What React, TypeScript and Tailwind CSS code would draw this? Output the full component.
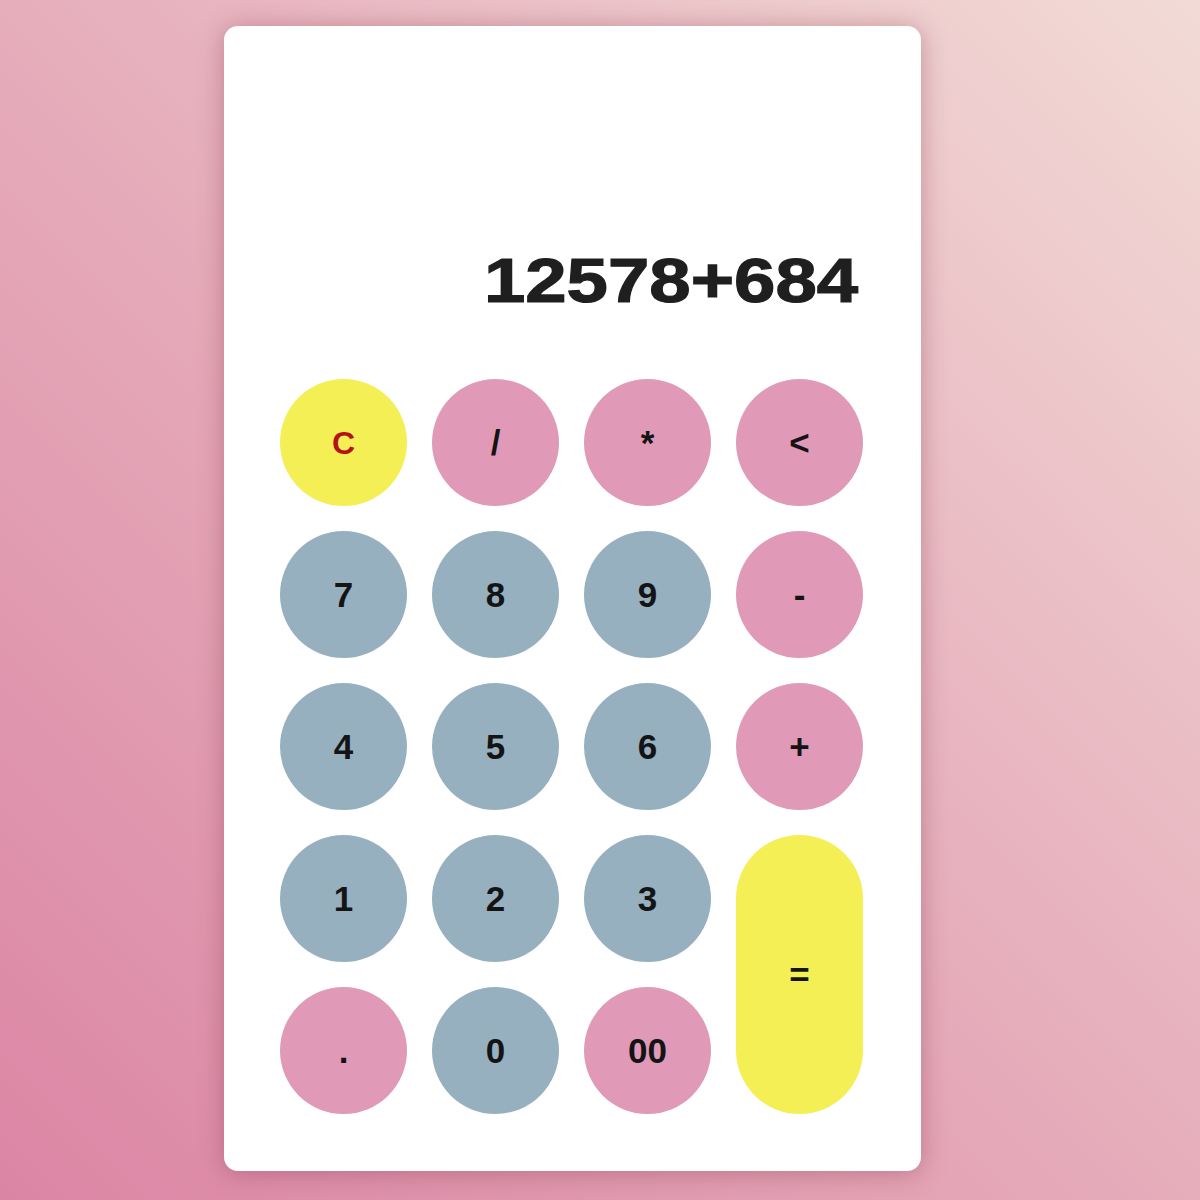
import React from 'react'

type Key = {
  label: string
  tone: 'yellow' | 'pink' | 'blue'
  tall?: boolean
  red?: boolean
}

const keys: Key[] = [
  { label: 'C', tone: 'yellow', red: true },
  { label: '/', tone: 'pink' },
  { label: '*', tone: 'pink' },
  { label: '<', tone: 'pink' },
  { label: '7', tone: 'blue' },
  { label: '8', tone: 'blue' },
  { label: '9', tone: 'blue' },
  { label: '-', tone: 'pink' },
  { label: '4', tone: 'blue' },
  { label: '5', tone: 'blue' },
  { label: '6', tone: 'blue' },
  { label: '+', tone: 'pink' },
  { label: '1', tone: 'blue' },
  { label: '2', tone: 'blue' },
  { label: '3', tone: 'blue' },
  { label: '=', tone: 'yellow', tall: true },
  { label: '.', tone: 'pink' },
  { label: '0', tone: 'blue' },
  { label: '00', tone: 'pink' }
]

const toneClass = {
  yellow: 'bg-[#f3ef55]',
  pink: 'bg-[#e09ab8]',
  blue: 'bg-[#96b0bf]'
}

export default function App() {
  return (
    <div className="w-full h-[1200px] overflow-hidden flex pl-[224px] pt-[26px] bg-[linear-gradient(to_top_right,#db85a4_0%,#e6adbb_50%,#f2dbd6_100%)] font-['Liberation_Sans',Arial,sans-serif]">
      <div className="w-[697px] h-[1145px] bg-white rounded-[14px] px-[56px] flex flex-col shadow-[0_2px_26px_rgba(130,50,70,0.4)]">
        {/* display */}
        <div className="h-[353px] flex items-end justify-end pr-[7px] pb-[67px]">
          <span className="inline-block origin-right scale-x-[1.18] text-[63px] leading-none font-bold text-[#1f1f1f] [-webkit-text-stroke:1.2px_#1f1f1f]">
            12578+684
          </span>
        </div>

        {/* keypad */}
        <div className="grid grid-cols-[repeat(4,127px)] grid-rows-[repeat(5,127px)] gap-[25px]">
          {keys.map(k => (
            <button
              key={k.label}
              className={`${toneClass[k.tone]} ${k.tall ? 'row-span-2' : ''} rounded-full flex items-center justify-center font-bold leading-none ${k.red ? 'text-[#b3121c] text-[32px]' : 'text-[#141414] text-[35px]'}`}
            >
              {k.label}
            </button>
          ))}
        </div>
      </div>
    </div>
  )
}
